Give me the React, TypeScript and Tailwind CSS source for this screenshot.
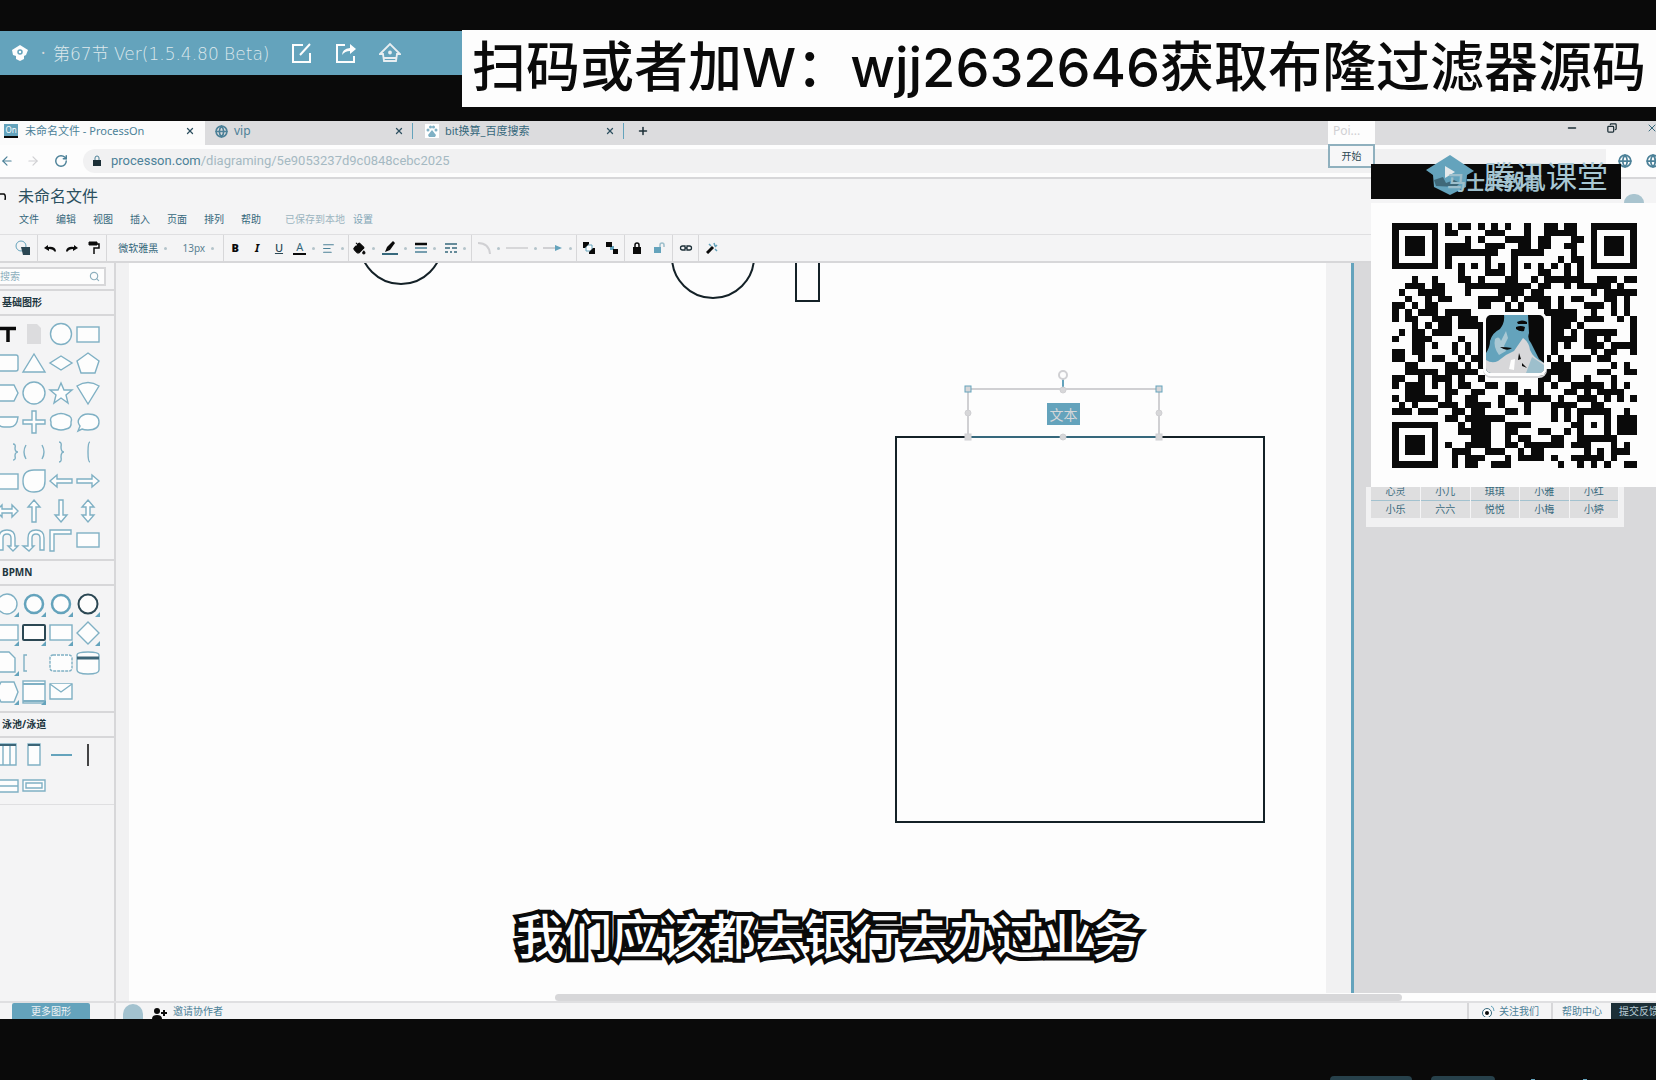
import React from "react";
import {
  ArrowLeft, ArrowRight, RotateCw, Minus, Copy, X, Plus, Globe, Search,
  PaintBucket, AlignLeft,
} from "lucide-react";

const INK = "#0a0a0a";
const BLUE = "#64a3bc";

/* Runs of dark modules, one string per row: "from-to" or a single column. */
const QR_ROWS = [
  "0-6,8,10-11,13,15,17,20,23-24,26-27,30-36",
  "0,6,8-9,14-16,20,23-27,30,36",
  "0,2-4,6,11,13,17-20,22-23,27-28,30,32-34,36",
  "0,2-4,6,8-11,14-16,19-20,22-23,26-27,30,32-34,36",
  "0,2-4,6,8-15,18-22,27,30,32-34,36",
  "0,6,8,14,18,25,27-28,30,36",
  "0-6,8,10,12,14,16,18,20,22,24,26,28,30-36",
  "10,14-16,18,22-23,26,28",
  "3,6,10-11,13,17-18,21,23-28,31-33,35-36",
  "2-4,6-7,11-20,22-23,26,28-32,34",
  "1,4-7,11,16-19,21-22,30,32-36",
  "2,5,7-8,13-16,18,20-23,25,27-28,32-33,35",
  "0-1,3,5-6,13-14,17,19,22-23,25,29-31,33,35",
  "0,2,4-6,8-11,17-19,23-27,30,33,35",
  "0,2-3,6-8,10-12,24-27,29-31,34,36",
  "3,5,7-8,10-13,24-26,28,36",
  "1,3-4,6-8,13,24-25,27,29-33,36",
  "0,3-5,10,13,24-27,29-30,32,36",
  "3-4,6,9,11,13,24,26,29-31,33-36",
  "0-1,3-4,9,11,13,24,30,32-33,36",
  "0-1,4,6-7,10,12-13,23,25,27-29,31-32",
  "2-3,8-9,11,13,24-26,33,35",
  "2-6,8-12,23-26,31-32,35-36",
  "0-1,4,6-8,10,13,22-23,25-26,29,33",
  "0,2-4,6,8,10-11,14-15,17-18,22,24,27-31,33,35",
  "2-4,8-9,12-13,17-18,20,22,26-27,29,31-33,34",
  "0,2-6,8,11-12,16,19-23,25,28-30,32,34,36",
  "1,3,7-9,11-14,16,20,24-27,30-31",
  "0-2,4-6,9-10,12-13,17-18,20,24,26,28-32,35",
  "8-9,11-16,24,26,28,32,34-36",
  "0-6,10,12-14,17-20,27-28,30,32,34-36",
  "0,6,10-14,17-18,22-23,26,28,32,34-36",
  "0,2-4,6,12-14,17,19-20,24-25,28-33",
  "0,2-4,6,8,11-14,17-18,20-25,27-29,33,35",
  "0,2-4,6,9-11,14-16,19,21-22,29,31,33-35",
  "0,6,9,11-13,17,19-22,24,27-31,33",
  "0-6,9,11-12,15-17,25,28,30,32,35-36",
];

function QrCode() {
  const rects: React.ReactNode[] = [];
  QR_ROWS.forEach((row, y) => {
    row.split(",").forEach((run) => {
      const [a, b = a] = run.split("-").map(Number);
      rects.push(<rect key={`${y}-${a}`} x={a} y={y} width={b - a + 1} height={1} />);
    });
  });
  return (
    <svg viewBox="0 0 37 37" className="block size-[245px]" fill={INK} shapeRendering="crispEdges" role="img" aria-label="QR">
      {rects}
    </svg>
  );
}

function Avatar() {
  return (
    <svg viewBox="0 0 58 58" className="block size-full">
      <rect width="58" height="58" fill={INK} />
      <path d="M18 0h24l1 18q-2 6 2 10l8 16 5 4v10H0V38q4-6 4-12 2-8 10-12 5-6 4-14z" fill={BLUE} />
      <path d="M0 45q6 4 12 1l8-6 8-4 9-13q6 4 7 12 3 8 14 13v10H0z" fill="#d7d7d9" />
      <path d="M46 42l12 8v8H40z" fill="#9dbfcc" />
      <path d="M9 24q4-4 6 2l5-10 2 7-4 8 2 5-7 4q-6-8-4-16z" fill="#a9c8d4" />
      <path d="M31 7q5-3 10 0v2h-9zM30 12q5-2 9 0l-1 4q-4 1-8-2zM14 32q6 0 12 1-5 4-12-1zM33 38l2 6-3 1zM36 48l5 5-5-2z" fill={INK} />
      <path d="M25 45l4-1-1 11-5-1z" fill="#fdfdfd" />
    </svg>
  );
}

const S = ({ children }: { children: React.ReactNode }) => (
  <button className="flex items-center justify-center">
    <svg viewBox="0 0 24 24" className="size-6 overflow-visible" fill="#fdfdfd" stroke="#7fb0c4" strokeWidth="1.4">
      {children}
    </svg>
  </button>
);
const Corner = () => <path d="M24 20v5h-5z" fill={BLUE} stroke="none" />;

function BasicShapes() {
  return (
    <div className="-ml-[7px] grid h-[236px] w-[108px] grid-cols-4 grid-rows-8">
      <S><path d="M4 6.500h17M13 6v14" stroke={INK} strokeWidth="3.500" /></S>
      <S><path d="M5 2h10l4 4v16H5z" fill="#dcdcde" stroke="none" /></S>
      <S><circle cx="12" cy="12" r="10.500" /></S>
      <S><rect x="1" y="5" width="22" height="15" /></S>
      <S><rect x="1" y="4" width="22" height="16" rx="2" /></S>
      <S><path d="M12 3l11 18H1z" /></S>
      <S><path d="M12 5l11 7-11 7-11-7z" /></S>
      <S><path d="M12 2l11 8-4 12H5L1 10z" /></S>
      <S><path d="M4 4h15l4 8-4 8H4l-3-8z" /></S>
      <S><circle cx="12" cy="12" r="11" /></S>
      <S><path d="M12 2l3 7h8l-6 5 2 8-7-5-7 5 2-8-6-5h8z" /></S>
      <S><path d="M1 5q11-7 22 0L12 23z" /></S>
      <S><path d="M1 7h22q-1 10-8 10H9Q2 17 1 7z" /></S>
      <S><path d="M10 1h4v9h9v4h-9v9h-4v-9H1v-4h9z" /></S>
      <S><path d="M6 5q6-3 12 0 6 2 4 7 1 6-5 7-5 2-10 0-6-1-5-7-2-5 4-7z" /></S>
      <S><path d="M2 21l2-5q-3-4-1-7 3-5 9-5 11 0 11 8t-11 8q-4 0-6-1z" /></S>
      <S><path d="M5 4q-3 0-2 4 0 4-3 4 3 0 3 4-1 4 2 4M18 4q3 0 2 4 0 4 3 4-3 0-3 4 1 4-2 4" fill="none" /></S>
      <S><path d="M4 5q-4 7 0 14M20 5q4 7 0 14" fill="none" /></S>
      <S><path d="M10 2q3 0 2 5 0 5 3 5-3 0-3 5 1 5-2 5" fill="none" /></S>
      <S><path d="M14 2q-2 0-2 10t2 10" fill="none" /></S>
      <S><rect x="1" y="5" width="22" height="15" /></S>
      <S><path d="M12 1h11v11q0 11-11 11T1 12 12 1z" /></S>
      <S><path d="M1 12l7-6v4h15v4H8v4z" /></S>
      <S><path d="M23 12l-7-6v4H1v4h15v4z" /></S>
      <S><path d="M1 12l6-6v4h10V6l6 6-6 6v-4H7v4z" /></S>
      <S><path d="M12 1l6 7h-4v15h-4V8H6z" /></S>
      <S><path d="M12 23l6-7h-4V1h-4v15H6z" /></S>
      <S><path d="M12 1l6 7h-4v8h4l-6 7-6-7h4V8H6z" /></S>
      <S><path d="M4 22V10Q4 2 12 2t8 8v8h3l-5 5-5-5h3v-8q0-4-4-4t-4 4v12z" /></S>
      <S><path d="M22 22V10q0-8-8-8T6 10v8H1l6 5 5-5H10v-8q0-4 4-4t4 4v12z" /></S>
      <S><path d="M1 23V2h21v4H5v17z" /></S>
      <S><rect x="1" y="5" width="22" height="14" /></S>
    </div>
  );
}

function BpmnShapes() {
  return (
    <div className="-ml-[7px] grid h-[118px] w-[108px] grid-cols-4 grid-rows-4">
      <S><circle cx="12" cy="12" r="10" /><Corner /></S>
      <S><circle cx="12" cy="12" r="9" strokeWidth="2.500" stroke={BLUE} /><Corner /></S>
      <S><circle cx="12" cy="12" r="9" strokeWidth="2.500" stroke={BLUE} /><Corner /></S>
      <S><circle cx="12" cy="12" r="9.500" strokeWidth="2" stroke="#2b4753" /><Corner /></S>
      <S><rect x="1" y="4" width="22" height="15" /><Corner /></S>
      <S><rect x="1" y="4" width="22" height="15" rx="1" strokeWidth="2" stroke="#2b4753" /><Corner /></S>
      <S><rect x="1" y="4" width="22" height="15" /><Corner /></S>
      <S><path d="M12 1l11 11-11 11L1 12z" /><Corner /></S>
      <S><path d="M2 1h12l6 6v14H2z" /><Corner /></S>
      <S><path d="M5 4H2v16h3" fill="none" /></S>
      <S><rect x="1" y="4" width="22" height="16" rx="3" strokeDasharray="3 1" /></S>
      <S><path d="M1 4q0-3 11-3t11 3v15q0 4-11 4T1 19z" /><path d="M1 7h22" strokeWidth="3" stroke="#3c6577" /></S>
      <S><path d="M6 2h13l4 10-4 10H6L1 12z" /><Corner /></S>
      <S><rect x="1" y="1" width="22" height="22" /><path d="M1 4h22M1 21h22" strokeWidth="2" /><Corner /></S>
      <S><path d="M1 4h22v15H1z" /><path d="M1 4l11 8 11-8" /></S>
    </div>
  );
}

function LaneShapes() {
  return (
    <div className="-ml-[7px] grid h-[62px] w-[108px] grid-cols-4 grid-rows-2">
      <S><path d="M2 1h19v21H2zM8 1v21M15 1v21" /><path d="M2 2h19" stroke="#3c6577" strokeWidth="2" /></S>
      <S><path d="M6 1h12v21H6z" /><path d="M6 2h12" stroke="#3c6577" strokeWidth="2" /></S>
      <S><path d="M2 12h21" stroke={BLUE} strokeWidth="2" /></S>
      <S><path d="M12 1v22" stroke={INK} strokeWidth="1.500" /></S>
      <S><path d="M1 6h22v12H1zM1 12h22" /></S>
      <S><path d="M1 6h22v11H1zM4 9h16v5H4z" /></S>
    </div>
  );
}

const Caret = () => <span className="size-[3px] rounded-full bg-[#b4c4cb]" />;
function Tool({ w, caret, label, children }: { w: string; caret?: boolean; label: string; children: React.ReactNode }) {
  return (
    <button aria-label={label} className={`flex h-full shrink-0 items-center justify-center ${caret ? "gap-[6px]" : ""} ${w}`}>
      {children}
      {caret && <Caret />}
    </button>
  );
}
const Group = ({ w, children }: { w: string; children: React.ReactNode }) => (
  <div className={`flex shrink-0 items-center justify-evenly border-r border-[#d7d7d9] ${w}`}>{children}</div>
);

function Toolbar() {
  return (
    <div className="flex h-[27px] border-t border-[#dfdfe1] text-[12px] text-[#0a0a0a]">
      <Group w="w-[38px]">
        <Tool w="w-5 ml-2" label="图形">
          <svg viewBox="0 0 16 16" className="size-4"><circle cx="6" cy="6" r="5" fill="none" stroke={BLUE} /><path d="M6 7h9v8H8z" fill="#2b4753" /></svg>
        </Tool>
      </Group>
      <Group w="w-[69px]">
        {[0, 1].map((i) => (
          <Tool key={i} w="w-[21px]" label={i ? "恢复" : "撤销"}>
            <svg viewBox="0 0 12 10" className={i ? "w-3 -scale-x-100" : "w-3"}><path d="M0 5l4-3v2q7-1 8 4l-1 1Q9 6 5 6v2z" fill={INK} /></svg>
          </Tool>
        ))}
        <Tool w="w-[21px]" label="格式刷">
          <svg viewBox="0 0 12 14" className="w-3"><path d="M1 1h8v3H1z" stroke={INK} fill={INK} /><path d="M9 3h2v4H6v6" stroke={INK} strokeWidth="1.500" fill="none" /></svg>
        </Tool>
      </Group>
      <Group w="w-[117px]">
        <Tool w="w-[62px]" caret label="字体"><span className="text-[10px] text-[#36687c]">微软雅黑</span></Tool>
        <Tool w="w-10" caret label="字号"><span className="text-[10px] text-[#5a8193]">13px</span></Tool>
      </Group>
      <Group w="w-[125px]">
        <Tool w="w-[21px]" label="粗体"><b className="text-[11px] font-black">B</b></Tool>
        <Tool w="w-[21px]" label="斜体"><b className="text-[11px]"><i>I</i></b></Tool>
        <Tool w="w-[21px]" label="下划线"><span className="text-[11px] font-medium text-[#2b4753] underline">U</span></Tool>
        <Tool w="w-[28px]" caret label="文字颜色"><span className="border-b-2 border-[#0a0a0a] px-[3px] text-[11px] leading-3 text-[#36687c]">A</span></Tool>
        <Tool w="w-[28px]" caret label="对齐"><AlignLeft size={13} color="#4c8198" /></Tool>
      </Group>
      <Group w="w-[123px]">
        <Tool w="w-[30px]" caret label="填充"><PaintBucket size={13} fill={INK} /></Tool>
        <Tool w="w-[30px]" caret label="线条颜色">
          <svg viewBox="0 0 16 14" className="w-4"><path d="M3 11l2-5 6-6 2 2-5 7z" fill={INK} /><path d="M0 13h16" stroke="#36687c" strokeWidth="2" /></svg>
        </Tool>
        <Tool w="w-[30px]" caret label="线宽">
          <svg viewBox="0 0 12 12" className="w-3"><path d="M0 2h12" stroke={INK} strokeWidth="2.500" /><path d="M0 6h12M0 10h12" stroke="#4c8198" strokeWidth="1.500" /></svg>
        </Tool>
        <Tool w="w-[30px]" caret label="线型">
          <svg viewBox="0 0 12 12" className="w-3"><path d="M0 2h12M0 6h5M7 6h5M0 10h3M5 10h2M9 10h3" stroke="#36687c" strokeWidth="1.500" /></svg>
        </Tool>
      </Group>
      <Group w="w-[105px]">
        <Tool w="w-[30px]" caret label="连线类型"><svg viewBox="0 0 14 14" className="w-[14px]"><path d="M1 2q11 0 12 11" fill="none" stroke="#d0d0d3" strokeWidth="2" /></svg></Tool>
        <Tool w="w-[35px]" caret label="起点"><span className="h-[2px] w-[22px] bg-[#d7d7d9]" /></Tool>
        <Tool w="w-[35px]" caret label="终点"><svg viewBox="0 0 20 8" className="w-5"><path d="M0 4h13" stroke="#d0d0d3" strokeWidth="2" /><path d="M12 1l7 3-7 3z" fill={BLUE} /></svg></Tool>
      </Group>
      <Group w="w-[48px]">
        <Tool w="w-[21px]" label="置于顶层"><svg viewBox="0 0 14 14" className="w-[14px]"><path d="M4 4h6v6H4z" fill="#fff" stroke={BLUE} /><path d="M1 1h6v2L3 7H1zM7 11l4-4h2v6H7z" fill={INK} /></svg></Tool>
        <Tool w="w-[21px]" label="置于底层"><svg viewBox="0 0 14 14" className="w-[14px]"><path d="M5 5h4v4H5z" fill={BLUE} /><path d="M1 1h6v5H1zM8 8h5v5H8z" fill={INK} /></svg></Tool>
      </Group>
      <Group w="w-[48px]">
        <Tool w="w-[21px]" label="锁定"><svg viewBox="0 0 10 12" className="w-[10px]"><path d="M1 5h8v7H1z" fill={INK} /><path d="M3 5V3q0-2 2-2t2 2v2" fill="none" stroke={INK} strokeWidth="1.500" /></svg></Tool>
        <Tool w="w-[21px]" label="解锁"><svg viewBox="0 0 13 12" className="w-[13px]"><path d="M1 5h7v6H1z" fill={BLUE} /><path d="M7 5V3q0-2 2-2t2 2v2" fill="none" stroke="#9dbfcc" strokeWidth="1.500" /></svg></Tool>
      </Group>
      <Group w="w-[26px]">
        <Tool w="w-[21px]" label="链接">
          <svg viewBox="0 0 14 8" className="w-[14px]"><path d="M6 2H3.500q-2 0-2 2t2 2H6zM8 2h2.500q2 0 2 2t-2 2H8zM6 4h2" fill="none" stroke="#1c2f37" strokeWidth="1.300" /></svg>
        </Tool>
      </Group>
      <Tool w="w-[26px]" label="美化">
        <svg viewBox="0 0 12 12" className="w-3"><path d="M1 11l6-6" stroke={INK} strokeWidth="3" /><path d="M3 2l2 2M8 1l1 3M11 3L9 5M11 9L9 7" stroke={BLUE} strokeWidth="1.500" /></svg>
      </Tool>
    </div>
  );
}

const SectionTitle = ({ children }: { children: React.ReactNode }) => (
  <h2 className="flex h-[25px] items-center border-b-2 border-[#d7d7d9] pl-[2px] text-[10px] font-bold text-[#1d3640]">{children}</h2>
);

function Canvas() {
  return (
    <div className="relative flex-1 overflow-hidden border-r-[3px] border-[#64a3bc] bg-[#f1f1f2] pl-[13px] pr-[25px]">
      <div className="h-full bg-[#fdfdfd]" />
      <svg className="absolute left-0 top-0 h-[600px] w-[1200px]" fill="none" stroke="#142127" strokeWidth="2">
        <circle cx="285" cy="-20" r="41" />
        <circle cx="597" cy="-6" r="41" />
        <path d="M680 -2v40h23V-2" />
        <rect x="780" y="174" width="368" height="385" />
        <g stroke="#d0d0d3">
          <rect x="852" y="126" width="191" height="48" fill="#fdfdfd" strokeWidth="2" />
          <path d="M854 174h188" stroke="#36687c" />
          <path d="M947 116v10" stroke={BLUE} />
          <circle cx="947" cy="112" r="4" fill="#fdfdfd" />
          <g fill="#d7d7d9" strokeWidth="1">
            <rect x="849" y="123" width="6" height="6" stroke={BLUE} />
            <rect x="1040" y="123" width="6" height="6" stroke={BLUE} />
            <rect x="849" y="171" width="6" height="6" />
            <rect x="1040" y="171" width="6" height="6" />
            <circle cx="852" cy="150" r="3" />
            <circle cx="1043" cy="150" r="3" />
            <circle cx="947" cy="127" r="3" />
            <circle cx="947" cy="174" r="3" />
          </g>
        </g>
      </svg>
      <span className="absolute left-[931px] top-[140px] flex h-[22px] w-[33px] items-center justify-center bg-[#64a3bc] text-[14px] text-[#d7d7d9]">文本</span>
    </div>
  );
}

const TabIconClose = ({ className = "" }: { className?: string }) => (
  <button aria-label="关闭标签页" className={`ml-auto ${className}`}><X size={10} strokeWidth={3} color="#2f5161" /></button>
);

export default function App() {
  return (
    <div className="relative flex min-h-screen w-full flex-col overflow-hidden bg-[#0a0a0a] font-['Noto_Sans','Noto_Sans_CJK_SC',sans-serif]">
      <header className="mt-[31px] flex h-11 items-center bg-[#64a3bc] text-[#eef2f4]">
        <svg viewBox="0 0 18 18" className="ml-[11px] size-[18px]"><path d="M9 1l8 5-2 5-2 1v3l-4 2-4-2v-3l-3-1-1-5z" fill="#fdfdfd" /><circle cx="9" cy="8" r="2" fill="none" stroke={BLUE} strokeWidth="1.500" /></svg>
        <span className="ml-3 w-3 text-[16px] text-[#d7d7d9]">·</span>
        <h1 className="w-[238px] whitespace-nowrap pt-1 font-['DejaVu_Sans','Noto_Sans_CJK_SC',sans-serif] text-[17px] font-light text-[#dde8ec]">第67节 Ver(1.5.4.80 Beta)</h1>
        <button aria-label="编辑" className="w-11">
          <svg viewBox="0 0 22 22" className="size-[22px]" fill="none" stroke="#fdfdfd" strokeWidth="2"><path d="M12 3H2v17h17v-9M9 13L19 2" /></svg>
        </button>
        <button aria-label="分享" className="w-11">
          <svg viewBox="0 0 22 22" className="size-[22px]" fill="none" stroke="#fdfdfd" strokeWidth="2"><path d="M10 3H2v17h17v-6" /><path d="M7 13q0-6 8-7V2l6 5-6 5V9q-5 0-8 4z" fill="#fdfdfd" stroke="none" /></svg>
        </button>
        <button aria-label="主页">
          <svg viewBox="0 0 22 22" className="size-[22px]" fill="none" stroke="#e8eef1" strokeWidth="1.800"><path d="M1 12L11 2l10 10h-3l-1 7H5l-1-7zM5 16h12" /><circle cx="11" cy="10.500" r="1" fill="#e8eef1" /></svg>
        </button>
      </header>

      <main className="mt-[46px] flex flex-1 flex-col bg-[#f4f4f5] text-[#4c8198]">
        <nav className="flex h-6 items-center bg-[#dcdcde] text-[12px]">
          <div className="flex h-full w-[205px] items-center bg-[#fbfbfb] pb-1 pl-1">
            <span className="flex size-[14px] items-center justify-center border-b-2 border-[#0a0a0a] bg-[#64a3bc] text-[8px] text-white">On</span>
            <span className="ml-[7px] text-[11px]">未命名文件 - ProcessOn</span>
            <TabIconClose className="mr-[10px]" />
          </div>
          <div className="flex h-full w-[208px] items-center pb-1 pl-[10px]">
            <Globe size={13} strokeWidth={3} />
            <span className="ml-[6px]">vip</span>
            <TabIconClose className="mr-2" />
            <span className="h-4 border-l border-[#64a3bc]" />
          </div>
          <div className="flex h-full w-[211px] items-center pb-1 pl-3">
            <span className="flex size-[14px] items-center justify-center bg-white">
              <svg viewBox="0 0 12 12" className="size-3" fill="#7fb0c4"><circle cx="2" cy="5" r="1.500" /><circle cx="4.500" cy="2" r="1.500" /><circle cx="7.500" cy="2" r="1.500" /><circle cx="10" cy="5" r="1.500" /><path d="M6 5l4 5-1 2H3l-1-2z" /></svg>
            </span>
            <span className="ml-[6px] text-[11px] text-[#36687c]">bit换算_百度搜索</span>
            <TabIconClose className="mr-2" />
            <span className="h-4 border-l border-[#64a3bc]" />
          </div>
          <button aria-label="新标签页" className="ml-[13px] pb-1"><Plus size={12} strokeWidth={3} color="#1c2f37" /></button>
          <div className="ml-auto flex items-center gap-[29px] pb-[10px] text-[#1c2f37]">
            <button aria-label="最小化"><Minus size={12} strokeWidth={3} /></button>
            <button aria-label="还原"><Copy size={10} strokeWidth={3} className="-scale-x-100" /></button>
            <button aria-label="关闭" className="-mr-1 w-[14px]"><X size={12} className="text-[#36687c]" /></button>
          </div>
        </nav>

        <div className="flex h-8 items-center bg-[#fdfdfd]">
          <button aria-label="后退" className="w-[26px]"><ArrowLeft size={14} /></button>
          <button aria-label="前进" className="w-7"><ArrowRight size={14} className="text-[#d0d0d3]" /></button>
          <button aria-label="刷新" className="w-[29px]"><RotateCw size={14} strokeWidth={2.5} /></button>
          <div className="flex h-6 flex-1 items-center rounded-l-full bg-[#f1f1f2] pl-[9px]">
            <svg viewBox="0 0 10 12" className="w-[10px]"><path d="M1 5h8v6H1z" fill="#1c2f37" /><path d="M3 5V3q0-2 2-2t2 2v2" fill="none" stroke="#4c8198" /></svg>
            <span className="ml-[9px] font-['Roboto',sans-serif] text-[13px]"><span className="text-[#4c8198]">processon.com</span><span className="text-[#a5b9c2]">/diagraming/5e9053237d9c0848cebc2025</span></span>
          </div>
          <div className="flex w-[50px] items-center justify-between pl-3">
            <Globe size={14} strokeWidth={3} />
            <Globe size={14} strokeWidth={3} className="-mr-1" />
          </div>
        </div>

        <section className="border-b-2 border-t-2 border-[#d7d7d9]">
          <div className="flex h-[33px] items-center">
            <button aria-label="返回" className="w-[18px]"><svg viewBox="0 0 6 8" className="h-2"><path d="M0 2h4q2 1 1 6" fill="none" stroke={INK} strokeWidth="1.500" /></svg></button>
            <span className="text-[16px] text-[#2b5060]">未命名文件</span>
          </div>
          <div className="flex h-[22px] items-start text-[10px] leading-[14px] text-[#36687c]">
            <div className="flex gap-[17px] pl-[19px]">
              {["文件", "编辑", "视图", "插入", "页面", "排列", "帮助"].map((m) => (
                <button key={m}>{m}</button>
              ))}
            </div>
            <span className="ml-6 text-[#9cb5c0]">已保存到本地</span>
            <a href="#settings" className="ml-2 text-[#7fa5b5]">设置</a>
          </div>
          <Toolbar />
        </section>

        <div className="flex min-h-[730px] flex-1">
          <aside className="w-[116px] shrink-0 border-r-2 border-[#d7d7d9] bg-[#f4f4f5]">
            <div className="border-b-2 border-[#d7d7d9] pb-[3px] pt-1">
              <label className="flex h-[19px] w-[106px] items-center border-2 border-l-0 border-[#d7d7d9] bg-[#fdfdfd]">
                <input aria-label="搜索" placeholder="搜索" className="w-0 flex-1 text-[10px] outline-none placeholder:text-[#8fb0be]" />
                <Search size={11} strokeWidth={2.5} className="mr-1 text-[#8fb0be]" />
              </label>
            </div>
            <SectionTitle>基础图形</SectionTitle>
            <div className="border-b-2 border-[#d7d7d9] pb-1 pt-[3px]"><BasicShapes /></div>
            <SectionTitle>BPMN</SectionTitle>
            <div className="border-b-2 border-[#d7d7d9] pb-1 pt-[3px]"><BpmnShapes /></div>
            <SectionTitle>泳池/泳道</SectionTitle>
            <div className="border-b border-[#dfdfe1] pb-[3px] pt-px"><LaneShapes /></div>
          </aside>
          <Canvas />
          <aside className="w-[302px] shrink-0 bg-[#d9d9db]" />
        </div>

        <div className="relative -mt-2 ml-[129px] flex h-2 items-center bg-[#fdfdfd] pl-[426px]">
          <div className="h-[7px] w-[847px] rounded-full bg-[#d7d7d9]" />
        </div>

        <footer className="flex h-[18px] items-end border-t-2 border-[#dfdfe1] text-[10px] leading-4">
          <div className="flex w-[116px] shrink-0 border-r-2 border-[#d7d7d9] pl-3">
            <button className="h-4 w-[78px] rounded-t-[2px] bg-[#64a3bc] leading-4 text-[#eef2f4]">更多图形</button>
          </div>
          <span className="ml-[7px] h-[15px] w-5 rounded-t-full bg-[#a3c2cf]" />
          <svg viewBox="0 0 15 11" className="ml-[9px] w-[15px]" fill={INK}><circle cx="5" cy="3" r="3" /><path d="M0 11q0-4 5-4t5 4zM9 4h6v2H9zM11 2h2v6h-2z" /></svg>
          <button className="ml-[6px] h-4">邀请协作者</button>
          <div className="ml-auto flex h-4 items-center overflow-hidden">
            <a href="#follow" className="flex h-4 w-[84px] items-center justify-center gap-1 border-l-2 border-[#d7d7d9]">
              <svg viewBox="0 0 14 12" className="w-[14px]"><circle cx="6" cy="8" r="4.500" fill="#fff" stroke="#36687c" /><circle cx="6" cy="8" r="2" fill={INK} /><path d="M10 1q3 1 3 5" fill="none" stroke={BLUE} /></svg>
              关注我们
            </a>
            <a href="#help" className="flex h-4 w-[60px] items-center justify-center border-l-2 border-[#d7d7d9]">帮助中心</a>
            <button className="h-4 w-[45px] overflow-hidden whitespace-nowrap bg-[#1c2f37] pl-2 text-left text-[#b9cdd6]">提交反馈</button>
          </div>
        </footer>
      </main>

      <div className="flex h-[61px] items-end justify-end overflow-hidden">
        <span className="mr-[19px] h-1 w-[82px] rounded-t bg-[#27414b]" />
        <span className="mr-9 h-1 w-[64px] rounded-t bg-[#27414b]" />
        <span className="mr-12 h-px w-1 bg-[#64a3bc]" />
        <span className="mr-[69px] h-px w-1 bg-[#64a3bc]" />
      </div>

      <p className="absolute left-[462px] right-0 top-[30px] flex h-[77px] items-center justify-center overflow-hidden whitespace-nowrap bg-[#fdfdfd] pb-[2px] font-['Inter','Noto_Sans_CJK_SC',sans-serif] text-[54px] font-medium text-[#0a0a0a]">
        扫码或者加W：wjj2632646获取布隆过滤器源码
      </p>

      <div className="absolute right-[281px] top-[121px] w-[47px] bg-[#fdfdfd]">
        <div className="h-[21px] pl-[5px] text-[12px] leading-5 text-[#d0d0d3]">Poi...</div>
        <button className="h-6 w-full border-2 border-[#8fb0be] bg-[#f7f7f8] text-[10px] leading-4 text-[#2b4753]">开始</button>
      </div>

      <section className="absolute right-0 top-[164px] w-[290px]">
        <div className="relative ml-[5px] h-[35px] w-[250px] bg-[#0a0a0a]">
          <svg viewBox="0 0 48 40" className="absolute -top-[9px] left-[55px] h-10 w-12"><path d="M24 0l24 16-7 4-1 12-16 8-16-8-1-12-7-5z" fill={BLUE} /><path d="M19 11l10 6-10 6z" fill="#e4e9eb" /><path d="M8 25l9-3 3 6 8-3 6 3-4 4-20-1z" fill="#27414b" opacity=".6" /></svg>
          <span className="absolute left-[76px] top-[7px] whitespace-nowrap text-[19px] font-bold leading-6 text-[#9dbfcc]">马士兵教育</span>
          <span className="absolute -top-[8px] left-[113px] whitespace-nowrap text-[31px] leading-10 text-[#a9c8d4]">腾讯课堂</span>
        </div>
        <div className="absolute right-3 top-[30px] h-[9px] w-5 rounded-t-full bg-[#a9c4cf]" />
        <div className="relative ml-[5px] mt-1 bg-[#fdfdfd] pb-[19px] pl-[21px] pt-5">
          <QrCode />
          <div className="absolute left-[112px] top-[109px] size-[64px] overflow-hidden rounded-[8px] border-[3px] border-[#fdfdfd] shadow-[0_2px_0_#d7d7d9]"><Avatar /></div>
        </div>
        <div className="w-[258px] bg-[#f1f1f2] px-[5px] pb-[9px]">
          <table className="w-full table-fixed border-collapse bg-[#dededf] text-center text-[10px] leading-[14px] text-[#36687c]">
            <tbody>
              {[["心灵", "小儿", "琪琪", "小雅", "小红"], ["小乐", "六六", "悦悦", "小梅", "小婷"]].map((row, i) => (
                <tr key={i} className="border-[#a3c2cf] first:border-b">
                  {row.map((c) => (
                    <td key={c} className="border-r border-[#f4f4f5] p-0">
                      <div className={i ? "h-[17px] leading-[17px]" : "flex h-[13px] items-end justify-center overflow-hidden leading-[18px]"}>{c}</div>
                    </td>
                  ))}
                </tr>
              ))}
            </tbody>
          </table>
        </div>
      </section>

      <p className="absolute inset-x-0 bottom-[122px] text-center font-['Noto_Sans_CJK_SC',sans-serif] text-[48px] font-medium leading-[50px] text-[#fdfdfd] [-webkit-text-stroke:8px_#0a0a0a] [paint-order:stroke_fill]">
        我们应该都去银行去办过业务
      </p>
    </div>
  );
}
